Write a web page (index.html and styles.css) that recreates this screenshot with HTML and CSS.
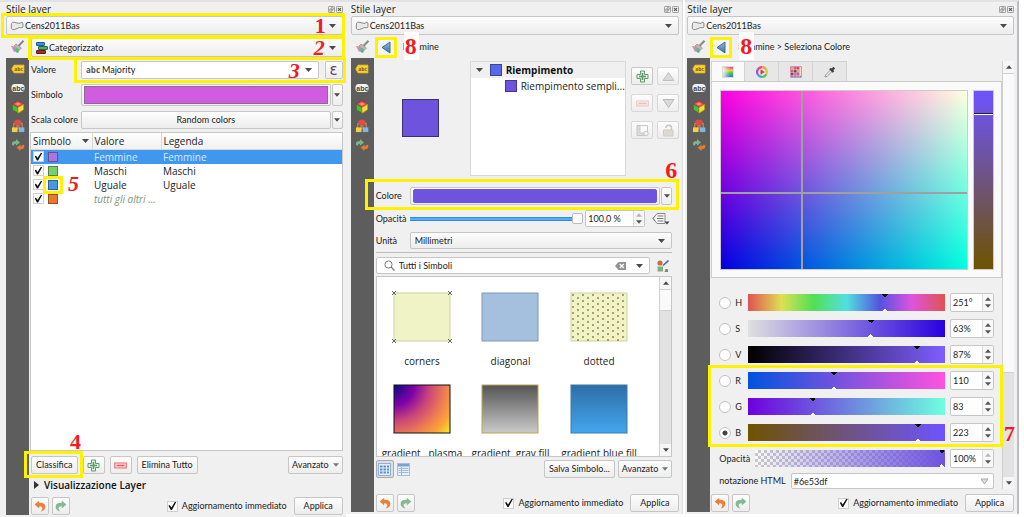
FILE: index.html
```html
<!DOCTYPE html>
<html lang="it">
<head>
<meta charset="utf-8">
<meta name="viewport" content="width=device-width, initial-scale=1">
<title>Stile layer</title>
<link rel="stylesheet" href="styles.css">
</head>
<body>
<svg class="defs" aria-hidden="true">
  <defs>
    <linearGradient id="g-plasma-a" x1="0" y1="0" x2="0" y2="1"><stop offset="0" stop-color="#8fb8dc"/><stop offset="1" stop-color="#3f74a8"/></linearGradient>
    <symbol id="i-poly" viewBox="0 0 14 10"><path d="M1.5 2.5Q2 .8 4 1.2T8 2.2T12 1.2Q13.2 1.5 13 4Q13.4 6.5 12 6.8Q9 6 7 7.6Q4.500 8.800 2.400 8.600Q1 8 1.300 6Z" fill="#e9e9e9" stroke="#8b8b8b"/></symbol>
    <symbol id="i-brush" viewBox="0 0 15 14"><path d="M13.500.8L8.500 6" stroke="#8a8a84" stroke-width="2"/><path d="M6 4L11.500 8L9.500 10L4 6Z" fill="#b9bbb4" stroke="#85877f" stroke-width=".6"/><path d="M1 6L5 6.500L7.500 10L4 12Q2.500 9 1 6Z" fill="#f08a90"/><path d="M4 6.500L6.500 8.500L6 12Q4 11 3.500 9Z" fill="#8d9be0"/><path d="M6 8L9.500 10L8 13Q6 13 5.500 11Z" fill="#58bd6a"/></symbol>
    <symbol id="i-tag" viewBox="0 0 14 10"><path d="M3 1H13V9H3L.6 5Z" fill="#f7cf38" stroke="#e0ad1c" stroke-width=".7"/><text x="3.200" y="7" class="glyph-dark">abc</text></symbol>
    <symbol id="i-abc" viewBox="0 0 14 10"><rect x=".4" y="1" width="13.200" height="8" rx="3.500" fill="#f2f2f2"/><text x="1.300" y="7.500" class="glyph-mask">abc</text></symbol>
    <symbol id="i-cube" viewBox="0 0 14 15"><path d="M7 .8L13 4.200L7 8L1 4.200Z" fill="#ee5048" stroke="#b1221e" stroke-width=".7"/><path d="M1 4.500L7 8V14.200L1 10.500Z" fill="#58b83c" stroke="#2c7a20" stroke-width=".7"/><path d="M13 4.500L7 8V14.200L13 10.500Z" fill="#f6dc38" stroke="#b59115" stroke-width=".7"/><path d="M4 4.300L7 2.600L10 4.300L7 6Z" fill="#f89088"/></symbol>
    <symbol id="i-diagram" viewBox="0 0 14 15"><path d="M2.500 10V5H11.500V10M6 6V11M8 6V11" stroke="#d98a4b" fill="none" stroke-width="1.200"/><path d="M5 .8H9L11.500 3L10 6.500H4L2.500 3Z" fill="#df4b4b"/><rect x=".5" y="9" width="6" height="5" fill="#f3d13c"/><rect x="7.800" y="9" width="6" height="5" fill="#7db5e8"/></symbol>
    <symbol id="i-history" viewBox="0 0 14 13"><path d="M1 6.500Q.2 2.200 5 2.400V.6L9 4L5 7.200V5.400Q2.600 5.200 2.600 7.500Z" fill="#7ab583"/><path d="M13.200 6.800Q14 11 9.500 10.800V12.600L5.500 9.300L9.500 6V7.800Q11.600 8 11.500 6Z" fill="#e07c38"/></symbol>
    <symbol id="i-categ" viewBox="0 0 12 12"><rect x=".5" y=".5" width="8" height="3" rx=".5" fill="#3f8fd8" stroke="#205a9c"/><rect x="2.500" y="4.500" width="9" height="3" rx=".5" fill="#4fae6b" stroke="#216b45"/><rect x=".5" y="8.500" width="9" height="3" rx=".5" fill="#ab2a22" stroke="#6e1411"/></symbol>
    <symbol id="i-plus" viewBox="0 0 13 13"><path d="M4.500 1H8.500V4.500H12V8.500H8.500V12H4.500V8.500H1V4.500H4.500Z" fill="#e3f0e3" stroke="#5f9b69"/><path d="M6.500 3V10M3 6.500H10" stroke="#5f9b69" stroke-width="1.600"/></symbol>
    <symbol id="i-minus" viewBox="0 0 13 7"><rect x=".7" y="1" width="11.600" height="5" fill="#fbdcdc" stroke="#ea6a6f"/><path d="M2.500 3.500H10.500" stroke="#ea5c63" stroke-width="1.500"/></symbol>
    <symbol id="i-undo" viewBox="0 0 12 12"><path d="M.6 4.500L5.200.8V2.800Q11.400 2.600 11.400 7Q11 10.800 6.500 11.400Q9 9.500 8.200 7.500Q7.500 6.200 5.200 6.200V8.400Z" fill="#e9813a"/></symbol>
    <symbol id="i-redo" viewBox="0 0 12 12"><path d="M11.400 4.500L6.800.8V2.800Q.6 2.600.6 7Q1 10.800 5.500 11.400Q3 9.500 3.800 7.500Q4.500 6.200 6.800 6.200V8.400Z" fill="#86b991"/></symbol>
    <symbol id="i-back" viewBox="0 0 10 13"><path d="M9 1V12L1 6.500Z" fill="url(#g-plasma-a)" stroke="#35648f" stroke-width=".9"/></symbol>
    <symbol id="i-up" viewBox="0 0 13 10"><path d="M6.500 1L12 9H1Z" fill="#dadada" stroke="#c0c0c0"/></symbol>
    <symbol id="i-down" viewBox="0 0 13 10"><path d="M6.500 9L12 1H1Z" fill="#dadada" stroke="#b9b9b9"/></symbol>
    <symbol id="i-copy" viewBox="0 0 13 12"><path d="M1 1H9.500V11H1Z" fill="#dcdcdc" stroke="#c6c6c6"/><path d="M4 1H11.500V8.500H4Z" fill="#fafafa" stroke="#c9c9c9"/><circle cx="10" cy="9" r="2.300" fill="#f2f2f2" stroke="#c6c6c6"/></symbol>
    <symbol id="i-lock" viewBox="0 0 13 13"><path d="M4 4V3.500Q4.200 1.200 6.700 1.200Q9.300 1.200 9.500 3.500V6" fill="none" stroke="#c6c6c6" stroke-width="1.500"/><rect x="1.500" y="6" width="9.500" height="6" rx=".5" fill="#dedace" stroke="#cdcac0"/></symbol>
    <symbol id="i-float" viewBox="0 0 8 8"><rect x=".5" y=".5" width="7" height="7" rx="1" fill="none" stroke="#8d8d8d"/><path d="M3.500 2H6V4.500H3.500ZM2 3.500H4.500V6H2Z" fill="none" stroke="#777" stroke-width=".7"/></symbol>
    <symbol id="i-close" viewBox="0 0 8 8"><rect x=".5" y=".5" width="7" height="7" rx="1" fill="none" stroke="#8d8d8d"/><path d="M2.300 2.300L5.700 5.700M5.700 2.300L2.300 5.700" stroke="#555" stroke-width="1.200"/></symbol>
    <symbol id="i-caret" viewBox="0 0 7 4"><path d="M0 0H7L3.500 4Z" fill="currentColor"/></symbol>
    <symbol id="i-caret-up" viewBox="0 0 7 4"><path d="M0 4H7L3.500 0Z" fill="currentColor"/></symbol>
    <symbol id="i-search" viewBox="0 0 11 11"><circle cx="4.500" cy="4.500" r="3.600" fill="none" stroke="#777"/><path d="M7.200 7.200L10.500 10.500" stroke="#777" stroke-width="1.200"/></symbol>
    <symbol id="i-clear" viewBox="0 0 11 8"><path d="M3.500 0H11V8H3.500L0 4Z" fill="#8f9296"/><path d="M4.800 2L8.800 6M8.800 2L4.800 6" stroke="#fff" stroke-width="1.200"/></symbol>
    <symbol id="i-style" viewBox="0 0 12 12"><circle cx="3" cy="3" r="2.600" fill="#c9703a"/><path d="M11.500.5L6 5.500" stroke="#3d75a8" stroke-width="1.600"/><rect x=".5" y="6.500" width="5.500" height="5" fill="#7fae87"/><text x="7.500" y="11.500" class="glyph-small">a</text></symbol>
    <symbol id="i-override" viewBox="0 0 18 14"><path d="M5 1.500H13V11.500H5L1 6.500Z" fill="#fafafa" stroke="#888"/><path d="M5.500 4H11.500M5 6.500H11.500M5.500 9H11.500M3 4L1 6.500L3 9" stroke="#777" fill="none"/><path d="M12.500 9.500H17.500L15 12.500Z" fill="#444"/></symbol>
    <symbol id="i-grid" viewBox="0 0 13 13"><rect x=".5" y=".5" width="12" height="12" fill="#e6effa" stroke="#8fb0dc"/><path d="M2 2.500H4.500V4.500H2ZM5.500 2.500H8V4.500H5.500ZM9 2.500H11V4.500H9ZM2 5.500H4.500V7.500H2ZM5.500 5.500H8V7.500H5.500ZM9 5.500H11V7.500H9ZM2 8.500H4.500V10.500H2ZM5.500 8.500H8V10.500H5.500ZM9 8.500H11V10.500H9Z" fill="#5f8fd0"/></symbol>
    <symbol id="i-list" viewBox="0 0 13 13"><rect x=".5" y=".5" width="12" height="12" fill="#e6effa" stroke="#a3bfe2"/><path d="M1 1H12V3.500H1Z" fill="#7ba3d8"/><path d="M4.500 3.500V12M1.500 5.500H11.500M1.500 7.500H11.500M1.500 9.500H11.500" stroke="#9bbbe3"/></symbol>
  </defs>
</svg>

<main class="docks">
  <section class="dock">
    <header class="dock-title"><h2>Stile layer</h2>
      <button type="button" class="tiny" aria-label="Sgancia"><svg><use href="#i-float"/></svg></button>
      <button type="button" class="tiny" aria-label="Chiudi"><svg><use href="#i-close"/></svg></button>
    </header>
    <div class="combo layer marked">
      <svg class="ic-poly"><use href="#i-poly"/></svg>
      <select aria-label="Layer"><option>Cens2011Bas</option></select>
      <svg class="caret"><use href="#i-caret"/></svg>
      <span class="mark mark-layer"></span><span class="num num-1">1</span>
    </div>
    <div class="dock-body">
      <nav class="side" aria-label="Pagine">
        <button type="button" class="active" aria-label="Simbologia"><svg><use href="#i-brush"/></svg></button>
        <div class="side-dark">
          <button type="button" aria-label="Etichette"><svg><use href="#i-tag"/></svg></button>
          <button type="button" aria-label="Maschere"><svg><use href="#i-abc"/></svg></button>
          <button type="button" aria-label="Vista 3D"><svg><use href="#i-cube"/></svg></button>
          <button type="button" aria-label="Diagrammi"><svg><use href="#i-diagram"/></svg></button>
          <button type="button" aria-label="Storico"><svg><use href="#i-history"/></svg></button>
        </div>
      </nav>
      <div class="content">
        <div class="combo renderer marked">
          <svg class="ic-categ"><use href="#i-categ"/></svg>
          <select aria-label="Tipo di simbologia"><option>Categorizzato</option></select>
          <svg class="caret"><use href="#i-caret"/></svg>
          <span class="mark mark-renderer"></span><span class="num num-2">2</span>
        </div>
        <div class="form">
          <label for="valore">Valore</label>
          <div class="field marked value-field">
            <div class="combo white grow"><span class="abc">abc</span>
              <select id="valore"><option>Majority</option></select>
              <svg class="caret"><use href="#i-caret"/></svg></div>
            <button type="button" class="btn epsilon" aria-label="Espressione">ε</button>
            <span class="mark mark-value"></span><span class="num num-3">3</span>
          </div>
          <label for="simbolo">Simbolo</label>
          <div class="field split tall">
            <button type="button" id="simbolo" class="btn grow color-btn"><span class="fill orchid"></span></button>
            <button type="button" class="btn drop" aria-label="Menu simbolo"><svg class="caret"><use href="#i-caret"/></svg></button>
          </div>
          <label for="scala">Scala colore</label>
          <div class="field split">
            <button type="button" id="scala" class="btn grow">Random colors</button>
            <button type="button" class="btn drop" aria-label="Menu scala colore"><svg class="caret"><use href="#i-caret"/></svg></button>
          </div>
        </div>
        <div class="list">
          <table>
            <colgroup><col class="c-sym"><col class="c-val"><col></colgroup>
            <thead><tr><th>Simbolo<svg class="caret sort"><use href="#i-caret"/></svg></th><th>Valore</th><th>Legenda</th></tr></thead>
            <tbody>
              <tr class="selected"><td><div class="sym"><input type="checkbox" checked aria-label="Femmine"><i class="sw violet"></i></div></td><td>Femmine</td><td>Femmine</td></tr>
              <tr><td><div class="sym"><input type="checkbox" checked aria-label="Maschi"><i class="sw green"></i></div></td><td>Maschi</td><td>Maschi</td></tr>
              <tr><td><div class="sym"><input type="checkbox" checked aria-label="Uguale"><span class="marked"><i class="sw blue"></i><span class="mark mark-swatch"></span><span class="num num-5">5</span></span></div></td><td>Uguale</td><td>Uguale</td></tr>
              <tr><td><div class="sym"><input type="checkbox" checked aria-label="Tutti gli altri"><i class="sw orange"></i></div></td><td class="other">tutti gli altri ...</td><td></td></tr>
            </tbody>
          </table>
        </div>
        <div class="row class-actions">
          <span class="marked"><button type="button" class="btn">Classifica</button><span class="mark mark-classify"></span><span class="num num-4">4</span></span>
          <button type="button" class="btn icon" aria-label="Aggiungi"><svg class="ic-13"><use href="#i-plus"/></svg></button>
          <button type="button" class="btn icon" aria-label="Rimuovi"><svg class="ic-minus"><use href="#i-minus"/></svg></button>
          <button type="button" class="btn">Elimina Tutto</button>
          <span class="grow"></span>
          <button type="button" class="btn menu">Avanzato<svg class="caret"><use href="#i-caret"/></svg></button>
        </div>
        <button type="button" class="disclosure"><svg viewBox="0 0 5 8"><path d="M0 0L5 4L0 8Z"/></svg>Visualizzazione Layer</button>
        <div class="row footer">
          <button type="button" class="btn square" aria-label="Annulla"><svg class="ic-12"><use href="#i-undo"/></svg></button>
          <button type="button" class="btn square" aria-label="Ripeti"><svg class="ic-12"><use href="#i-redo"/></svg></button>
          <span class="grow"></span>
          <label class="check"><input type="checkbox" checked>Aggiornamento immediato</label>
          <button type="button" class="btn apply">Applica</button>
        </div>
      </div>
    </div>
  </section>

  <section class="dock dock-mid">
    <header class="dock-title"><h2>Stile layer</h2>
      <button type="button" class="tiny" aria-label="Sgancia"><svg><use href="#i-float"/></svg></button>
      <button type="button" class="tiny" aria-label="Chiudi"><svg><use href="#i-close"/></svg></button>
    </header>
    <div class="combo layer">
      <svg class="ic-poly"><use href="#i-poly"/></svg>
      <select aria-label="Layer"><option>Cens2011Bas</option></select>
      <svg class="caret"><use href="#i-caret"/></svg>
    </div>
    <div class="dock-body">
      <nav class="side" aria-label="Pagine">
        <button type="button" class="active" aria-label="Simbologia"><svg><use href="#i-brush"/></svg></button>
        <div class="side-dark">
          <button type="button" aria-label="Etichette"><svg><use href="#i-tag"/></svg></button>
          <button type="button" aria-label="Maschere"><svg><use href="#i-abc"/></svg></button>
          <button type="button" aria-label="Vista 3D"><svg><use href="#i-cube"/></svg></button>
          <button type="button" aria-label="Diagrammi"><svg><use href="#i-diagram"/></svg></button>
          <button type="button" aria-label="Storico"><svg><use href="#i-history"/></svg></button>
        </div>
      </nav>
      <div class="content">
        <div class="crumbs marked">
          <button type="button" class="back" aria-label="Indietro"><svg><use href="#i-back"/></svg></button>
          <span>Femmine</span><span class="num num-8">8</span>
        </div>
        <div class="symbol">
          <div class="preview"></div>
          <ul class="tree">
            <li class="root"><svg class="caret"><use href="#i-caret"/></svg><i class="sw indigo"></i>Riempimento</li>
            <li class="leaf"><i class="sw purple"></i>Riempimento sempli...</li>
          </ul>
          <div class="tools marked">
            <button type="button" class="btn" aria-label="Aggiungi livello"><svg class="ic-13"><use href="#i-plus"/></svg></button>
            <button type="button" class="btn off" disabled aria-label="Sposta su"><svg class="ic-13"><use href="#i-up"/></svg></button>
            <button type="button" class="btn off faded" disabled aria-label="Rimuovi livello"><svg class="ic-minus"><use href="#i-minus"/></svg></button>
            <button type="button" class="btn off" disabled aria-label="Sposta giù"><svg class="ic-13"><use href="#i-down"/></svg></button>
            <button type="button" class="btn off" disabled aria-label="Duplica"><svg class="ic-13"><use href="#i-copy"/></svg></button>
            <button type="button" class="btn off" disabled aria-label="Blocca"><svg class="ic-13"><use href="#i-lock"/></svg></button>
          </div>
        </div>
        <div class="props">
          <div class="prop color-row marked">
            <label for="colore">Colore</label>
            <div class="field split grow">
              <button type="button" id="colore" class="btn grow color-btn"><span class="fill purple round"></span></button>
              <button type="button" class="btn drop" aria-label="Menu colore"><svg class="caret"><use href="#i-caret"/></svg></button>
            </div>
            <span class="mark mark-color"></span><span class="num num-6">6</span>
          </div>
          <div class="prop">
            <label for="opacita">Opacità</label>
            <input type="range" id="opacita" class="bar grow" min="0" max="100" value="100">
            <span class="spin wide"><input type="text" value="100,0 %" aria-label="Valore opacità"><span class="steps"><button type="button" class="dim" aria-label="Aumenta"><svg><use href="#i-caret-up"/></svg></button><button type="button" aria-label="Riduci"><svg><use href="#i-caret"/></svg></button></span></span>
            <button type="button" class="override" aria-label="Sovrascrittura dati"><svg><use href="#i-override"/></svg></button>
          </div>
          <div class="prop">
            <label for="unita">Unità</label>
            <div class="combo grow"><select id="unita"><option>Millimetri</option></select><svg class="caret"><use href="#i-caret"/></svg></div>
          </div>
          <hr>
          <div class="row search-row">
            <div class="combo white grow">
              <svg class="ic-search"><use href="#i-search"/></svg>
              <input type="text" value="Tutti i Simboli" aria-label="Cerca simboli">
              <svg class="ic-clear"><use href="#i-clear"/></svg>
              <svg class="caret"><use href="#i-caret"/></svg>
            </div>
            <button type="button" class="plain" aria-label="Gestore stile"><svg class="ic-12"><use href="#i-style"/></svg></button>
          </div>
          <div class="gallery">
            <div class="thumbs">
              <figure><svg viewBox="0 0 60 52"><rect x="2" y="2" width="56" height="48" fill="#f0f3c6" stroke="#cfd3a0"/><path d="M0 0L4 4M4 0L0 4M56 0L60 4M60 0L56 4M0 48L4 52M4 48L0 52M56 48L60 52M60 48L56 52" stroke="#666"/></svg><figcaption>corners</figcaption></figure>
              <figure><svg viewBox="0 0 60 52"><rect x="2" y="2" width="56" height="48" fill="#a5bfdf" stroke="#7f98b5"/></svg><figcaption>diagonal</figcaption></figure>
              <figure><svg viewBox="0 0 60 52"><defs><pattern id="p-dots" width="10" height="6" patternUnits="userSpaceOnUse" x="3" y="2"><circle cx="1" cy="2" r=".9" fill="#8a7c3f"/><circle cx="6" cy="5" r=".9" fill="#8a7c3f"/></pattern></defs><rect x="2" y="2" width="56" height="48" fill="#f0f3c6" stroke="#cfd3a0"/><rect x="2" y="2" width="56" height="48" fill="url(#p-dots)"/></svg><figcaption>dotted</figcaption></figure>
              <figure><svg viewBox="0 0 60 52"><defs><radialGradient id="g-plasma" gradientUnits="userSpaceOnUse" cx="2" cy="2" r="72"><stop offset="0" stop-color="#0d0887"/><stop offset=".28" stop-color="#7e03a8"/><stop offset=".5" stop-color="#cb4679"/><stop offset=".72" stop-color="#f07f4f"/><stop offset=".87" stop-color="#fca636"/><stop offset="1" stop-color="#f3e824"/></radialGradient></defs><rect x="2" y="2" width="56" height="48" fill="url(#g-plasma)" stroke="#111"/></svg><figcaption>gradient&nbsp; &nbsp;plasma</figcaption></figure>
              <figure><svg viewBox="0 0 60 52"><defs><linearGradient id="g-gray" x2="0" y2="1"><stop offset="0" stop-color="#545454"/><stop offset="1" stop-color="#cacaca"/></linearGradient></defs><rect x="2" y="2" width="56" height="48" fill="url(#g-gray)" stroke="#b7a64c"/></svg><figcaption>gradient&nbsp; gray fill</figcaption></figure>
              <figure><svg viewBox="0 0 60 52"><defs><linearGradient id="g-blue" x2="0" y2="1"><stop offset="0" stop-color="#2d6fa5"/><stop offset="1" stop-color="#44a5f0"/></linearGradient></defs><rect x="2" y="2" width="56" height="48" fill="url(#g-blue)" stroke="#3d7aa6"/></svg><figcaption>gradient blue fill</figcaption></figure>
            </div>
            <div class="scroll"><span class="arrow"><svg class="caret"><use href="#i-caret-up"/></svg></span><span class="handle short"></span><span class="grow"></span><span class="arrow"><svg class="caret"><use href="#i-caret"/></svg></span></div>
          </div>
          <div class="row view-row">
            <button type="button" class="btn square pressed" aria-label="Vista icone"><svg class="ic-13"><use href="#i-grid"/></svg></button>
            <button type="button" class="plain" aria-label="Vista elenco"><svg class="ic-13"><use href="#i-list"/></svg></button>
            <span class="grow"></span>
            <button type="button" class="btn">Salva Simbolo...</button>
            <button type="button" class="btn menu">Avanzato<svg class="caret"><use href="#i-caret"/></svg></button>
          </div>
        </div>
        <div class="row footer">
          <button type="button" class="btn square" aria-label="Annulla"><svg class="ic-12"><use href="#i-undo"/></svg></button>
          <button type="button" class="btn square" aria-label="Ripeti"><svg class="ic-12"><use href="#i-redo"/></svg></button>
          <span class="grow"></span>
          <label class="check"><input type="checkbox" checked>Aggiornamento immediato</label>
          <button type="button" class="btn apply">Applica</button>
        </div>
      </div>
    </div>
  </section>

  <section class="dock dock-last">
    <header class="dock-title"><h2>Stile layer</h2>
      <button type="button" class="tiny" aria-label="Sgancia"><svg><use href="#i-float"/></svg></button>
      <button type="button" class="tiny" aria-label="Chiudi"><svg><use href="#i-close"/></svg></button>
    </header>
    <div class="combo layer">
      <svg class="ic-poly"><use href="#i-poly"/></svg>
      <select aria-label="Layer"><option>Cens2011Bas</option></select>
      <svg class="caret"><use href="#i-caret"/></svg>
    </div>
    <div class="dock-body">
      <nav class="side" aria-label="Pagine">
        <button type="button" class="active" aria-label="Simbologia"><svg><use href="#i-brush"/></svg></button>
        <div class="side-dark">
          <button type="button" aria-label="Etichette"><svg><use href="#i-tag"/></svg></button>
          <button type="button" aria-label="Maschere"><svg><use href="#i-abc"/></svg></button>
          <button type="button" aria-label="Vista 3D"><svg><use href="#i-cube"/></svg></button>
          <button type="button" aria-label="Diagrammi"><svg><use href="#i-diagram"/></svg></button>
          <button type="button" aria-label="Storico"><svg><use href="#i-history"/></svg></button>
        </div>
      </nav>
      <div class="content">
        <div class="crumbs marked">
          <button type="button" class="back" aria-label="Indietro"><svg><use href="#i-back"/></svg></button>
          <span>Femmine &gt; Seleziona Colore</span><span class="num num-8">8</span>
        </div>
        <div class="picker">
          <div class="picker-main">
            <div class="tabs" role="tablist">
              <button type="button" role="tab" aria-selected="true" aria-label="Gradiente"><i class="t-ramp"></i></button>
              <button type="button" role="tab" aria-label="Ruota"><svg viewBox="0 0 12 12"><g fill="none" stroke-width="2.200"><path d="M6 1.200A4.800 4.800 0 0 1 10.200 3.600" stroke="#f0a02c"/><path d="M10.200 3.600A4.800 4.800 0 0 1 10.200 8.400" stroke="#c6d43a"/><path d="M10.200 8.400A4.800 4.800 0 0 1 6 10.800" stroke="#4fc45d"/><path d="M6 10.800A4.800 4.800 0 0 1 1.800 8.400" stroke="#42a6e0"/><path d="M1.800 8.400A4.800 4.800 0 0 1 1.800 3.600" stroke="#8a58d6"/><path d="M1.800 3.600A4.800 4.800 0 0 1 6 1.200" stroke="#e8408c"/></g><path d="M4.500 3.300L8.900 6L4.500 8.700Z" fill="#e2373c"/></svg></button>
              <button type="button" role="tab" aria-label="Campioni"><svg viewBox="0 0 12 12"><path fill="#b0306a" d="M.5.500H11.500V11.500H.5Z"/><path fill="#f0a060" d="M1 1H3.500V3.500H1ZM7 4H9V6H7Z"/><path fill="#e05858" d="M4 1H6.500V3.500H4ZM1 4H3.500V6.500H1ZM4 7H6.500V9H4Z"/><path fill="#f7d7c0" d="M9.500 1H11V11H9.500Z"/><path fill="#5d3a6d" d="M4 4H6.500V6.500H4ZM1 7H3.500V9H1Z"/><path fill="#6d8fd0" d="M1 9.500H11V11H1Z"/><path d="M3.700.500V11.500M6.800.500V11.500M9.200.500V11.500M.5 3.700H11.500M.5 6.700H11.500M.5 9.200H11.500" stroke="#f4e6ec" stroke-width=".5"/></svg></button>
              <button type="button" role="tab" aria-label="Contagocce"><svg viewBox="0 0 12 12"><path d="M7 3.500L8.500 5L3 10.500L1 11L1.500 9Z" fill="#e9e9e9" stroke="#888" stroke-width=".8"/><path d="M6 2.500L9.500 6M7.800 4.200L10.300 1.700" stroke="#35424f" stroke-width="2.400"/></svg></button>
            </div>
            <div class="plane">
              <div class="field2d"><i class="line-v"></i><i class="line-h"></i></div>
              <div class="ramp"><i></i></div>
            </div>
            <div class="channels">
              <div class="chan"><input type="radio" name="ch" id="ch-h"><label for="ch-h">H</label><input type="range" class="grad g-h" aria-label="H" max="359" value="251"><span class="spin"><input type="text" value="251°" aria-label="Valore H"><span class="steps"><button type="button" aria-label="Aumenta"><svg><use href="#i-caret-up"/></svg></button><button type="button" aria-label="Riduci"><svg><use href="#i-caret"/></svg></button></span></span></div>
              <div class="chan"><input type="radio" name="ch" id="ch-s"><label for="ch-s">S</label><input type="range" class="grad g-s" aria-label="S" max="100" value="63"><span class="spin"><input type="text" value="63%" aria-label="Valore S"><span class="steps"><button type="button" aria-label="Aumenta"><svg><use href="#i-caret-up"/></svg></button><button type="button" aria-label="Riduci"><svg><use href="#i-caret"/></svg></button></span></span></div>
              <div class="chan"><input type="radio" name="ch" id="ch-v"><label for="ch-v">V</label><input type="range" class="grad g-v" aria-label="V" max="100" value="87"><span class="spin"><input type="text" value="87%" aria-label="Valore V"><span class="steps"><button type="button" aria-label="Aumenta"><svg><use href="#i-caret-up"/></svg></button><button type="button" aria-label="Riduci"><svg><use href="#i-caret"/></svg></button></span></span></div>
              <div class="rgb marked">
                <div class="chan"><input type="radio" name="ch" id="ch-r"><label for="ch-r">R</label><input type="range" class="grad g-r" aria-label="R" max="255" value="110"><span class="spin"><input type="text" value="110" aria-label="Valore R"><span class="steps"><button type="button" aria-label="Aumenta"><svg><use href="#i-caret-up"/></svg></button><button type="button" aria-label="Riduci"><svg><use href="#i-caret"/></svg></button></span></span></div>
                <div class="chan"><input type="radio" name="ch" id="ch-g"><label for="ch-g">G</label><input type="range" class="grad g-g" aria-label="G" max="255" value="83"><span class="spin"><input type="text" value="83" aria-label="Valore G"><span class="steps"><button type="button" aria-label="Aumenta"><svg><use href="#i-caret-up"/></svg></button><button type="button" aria-label="Riduci"><svg><use href="#i-caret"/></svg></button></span></span></div>
                <div class="chan"><input type="radio" name="ch" id="ch-b" checked><label for="ch-b">B</label><input type="range" class="grad g-b" aria-label="B" max="255" value="223"><span class="spin"><input type="text" value="223" aria-label="Valore B"><span class="steps"><button type="button" aria-label="Aumenta"><svg><use href="#i-caret-up"/></svg></button><button type="button" aria-label="Riduci"><svg><use href="#i-caret"/></svg></button></span></span></div>
                <span class="mark mark-rgb"></span><span class="num num-7">7</span>
              </div>
              <div class="chan"><label class="long" for="alpha">Opacità</label><input type="range" id="alpha" class="grad g-a" max="100" value="100"><span class="spin"><input type="text" value="100%" aria-label="Valore opacità"><span class="steps"><button type="button" class="dim" aria-label="Aumenta"><svg><use href="#i-caret-up"/></svg></button><button type="button" aria-label="Riduci"><svg><use href="#i-caret"/></svg></button></span></span></div>
            </div>
            <div class="html-row"><label for="html">notazione HTML</label>
              <div class="combo white grow"><input type="text" id="html" value="#6e53df"><svg class="caret-open" viewBox="0 0 9 7"><path d="M1 1H8L4.500 6Z" fill="#ddd" stroke="#aaa"/></svg></div>
            </div>
          </div>
          <div class="scroll"><span class="arrow"><svg class="caret"><use href="#i-caret-up"/></svg></span><span class="handle long"></span><span class="grow"></span><span class="arrow"><svg class="caret"><use href="#i-caret"/></svg></span></div>
        </div>
        <div class="row footer">
          <button type="button" class="btn square" aria-label="Annulla"><svg class="ic-12"><use href="#i-undo"/></svg></button>
          <button type="button" class="btn square" aria-label="Ripeti"><svg class="ic-12"><use href="#i-redo"/></svg></button>
          <span class="grow"></span>
          <label class="check"><input type="checkbox" checked>Aggiornamento immediato</label>
          <button type="button" class="btn apply">Applica</button>
        </div>
      </div>
    </div>
  </section>
</main>
</body>
</html>
```
FILE: styles.css
```css
:root {
  --ui: "Lato", "Open Sans", sans-serif;
  --list: "Open Sans", "Noto Sans", sans-serif;
  --bg: #f0f0f0;
  --line: #c6c6c6;
  --mark: #fff200;
  --purple: #6e53df;
}

* { box-sizing: border-box; }

body {
  margin: 0;
  background: #fff;
  color: #222;
  font: 9px/12px var(--ui);
}

button, input, select { font: inherit; color: inherit; margin: 0; padding: 0; }
button { border: 0; background: none; }
svg { display: block; flex: none; }
h2, ul, figure { margin: 0; padding: 0; }
ul { list-style: none; }
label { white-space: nowrap; }
.defs { position: absolute; width: 0; height: 0; }
.grow { flex: 1; min-width: 0; }

.docks {
  display: grid;
  grid-template-columns: 345fr 337fr 335fr;
  min-height: 100vh;
  padding-right: 5px;
}
.dock {
  display: flex;
  flex-direction: column;
  min-width: 0;
  padding: 0 3px 3px 6px;
  background: var(--bg);
  border-top: 2px solid #e2e2e2;
}
.dock-mid { margin: 0 0 4px; padding: 0 3px 2px 5px; border-right: 1px solid #dcdcdc; }
.dock-last { margin: 0 0 4px 2px; padding: 0 3px 2px 2px; border-right: 2px solid #bcbcc2; }

.dock-title { display: flex; align-items: center; gap: 1px; height: 14px; }
.dock-title h2 { flex: 1; font: 10px/14px var(--list); }
.tiny svg { width: 7px; height: 7px; }

/* Combo boxes and buttons */
.combo, .btn {
  display: flex;
  align-items: center;
  background: linear-gradient(#fdfdfd, #ededed);
  border: 1px solid var(--line);
  border-radius: 2px;
}
.combo { height: 17px; padding: 0 6px 0 4px; }
.combo.white { background: #fff; }
.combo.layer { height: 19px; padding-left: 3px; }
.combo select, .combo input {
  flex: 1;
  min-width: 0;
  height: 14px;
  appearance: none;
  border: 0;
  outline: 0;
  background: none;
}
.caret { width: 7px; height: 4px; color: #4a4a4a; }
.btn { justify-content: center; height: 18px; padding: 0 4px; white-space: nowrap; }
.btn.drop { width: 11px; padding: 0; }
.btn.drop .caret { width: 6px; }
.btn.icon { width: 22px; padding: 0; }
.btn.square { width: 18px; padding: 0; }
.btn.pressed { background: #dedede; border-color: #aaa; }
.btn.menu { gap: 4px; padding: 0 3px; }
.btn.menu .caret { width: 6px; color: #777; }
.ic-poly { width: 14px; height: 10px; margin-right: 1px; }
.ic-categ { width: 12px; height: 12px; margin-right: 1px; }
.ic-12 { width: 12px; height: 12px; }
.ic-13 { width: 13px; height: 13px; }
.ic-minus { width: 13px; height: 7px; }
.row { display: flex; align-items: center; }

/* Side navigation */
.dock-body { flex: 1; display: grid; grid-template-columns: 23px 1fr; column-gap: 2px; }
.dock-last .dock-body { column-gap: 1px; }
.side { display: flex; flex-direction: column; }
.side button { display: grid; place-items: center; height: 19px; width: 100%; }
.side svg { width: 14px; height: 14px; }
.side .active { height: 23px; }
.side .active svg { width: 15px; height: 14px; }
.side-dark { flex: 1; padding-top: 1px; background: #5d5d5d; }
.glyph-dark { font: bold 5px var(--list); fill: #7a5a10; }
.glyph-mask { font: bold 7px "Liberation Sans", sans-serif; fill: #444; }
.glyph-small { font: bold 6px var(--list); fill: #555; }

.content { display: flex; flex-direction: column; min-width: 0; }

/* Categorised renderer */
.combo.renderer { height: 19px; margin-top: 3px; }
.form {
  display: grid;
  grid-template-columns: 50px 1fr;
  align-items: center;
  row-gap: 5px;
  padding-top: 4px;
}
.field { display: flex; gap: 6px; }
.field.split { gap: 0; }
.form .field .btn, .form .combo { height: 18px; }
.form .field.tall .btn { height: 22px; }
.field .drop { margin-left: 1px; }
.abc { margin-right: 2px; font: bold 8px/12px var(--list); color: #555; }
.epsilon { width: 18px; padding: 0; font: 15px/14px "DejaVu Sans", sans-serif; color: #5b4a6b; }
.color-btn { padding: 1px 2px; }
.fill { flex: 1; align-self: stretch; border: 1px solid #8d6b98; }
.fill.orchid { background: #d05ce0; }
.fill.purple { background: var(--purple); border-color: var(--purple); }
.fill.round { border-radius: 2px; }

.list { flex: 1; margin: 3px 0 5px -1px; background: #fff; border: 1px solid var(--line); }
table { width: 100%; table-layout: fixed; border-collapse: collapse; font: 10px/14px var(--list); }
.c-sym { width: 61px; }
.c-val { width: 69px; }
th, td { padding: 0 2px; text-align: left; font-weight: normal; white-space: nowrap; height: 14px; }
th { position: relative; height: 16px; background: linear-gradient(#fff, #f0f0f0); border-right: 1px solid #d8d8d8; border-bottom: 1px solid #d8d8d8; }
th:last-child { border-right: 0; }
.sort { position: absolute; right: 3px; top: 6px; }
.selected { background: #3f97ee; color: #d8eaff; }
.other { color: #80957f; font-style: italic; }
.sym { display: flex; align-items: center; gap: 4px; }
.sw { display: block; flex: none; width: 10px; height: 10px; border: 1px solid rgb(0 0 0 / 35%); }
.sw.violet { background: #a677e0; }
.sw.green { background: #77d06c; }
.sw.blue { background: #4299e6; }
.sw.orange { background: #e8792f; }
.sw.indigo { background: #5868e8; }
.sw.purple { background: var(--purple); }

input[type="checkbox"] {
  appearance: none;
  display: grid;
  place-items: center;
  width: 11px;
  height: 11px;
  background: #fff;
  border: 1px solid #cfcfcf;
}
input[type="checkbox"]:checked::before {
  content: "";
  width: 8px;
  height: 8px;
  background: #111;
  clip-path: polygon(0 45%, 20% 40%, 38% 68%, 82% 0, 100% 0, 45% 100%, 30% 100%);
}

.class-actions { gap: 5px; }
.disclosure {
  display: flex;
  align-items: center;
  gap: 5px;
  height: 21px;
  padding-left: 3px;
  font: 600 10px/14px var(--list);
  color: #111;
}
.disclosure svg { width: 5px; height: 8px; fill: #333; }

.footer { gap: 3px; margin-top: 2px; }
.check { display: flex; align-items: center; gap: 4px; margin-right: 4px; }
.apply { width: 49px; padding: 0; }

/* Callouts */
.marked { position: relative; }
.mark { position: absolute; border: 3px solid var(--mark); pointer-events: none; }
.num { position: absolute; font: bold 22px/18px "Liberation Serif", serif; color: #ee1c25; pointer-events: none; }
.mark-layer { inset: -4px -3px -4px -6px; }
.mark-renderer { inset: -3px -3px -4px -4px; }
.mark-value { inset: -4px -3px -4px -7px; }
.mark-swatch { inset: -4px -5px; }
.mark-classify { inset: -5px -5px -4px -7px; }
.mark-color { inset: -8px -7px -5px -11px; }
.mark-rgb { inset: -6px -9px -5px -11px; }
.num-1 { right: 16px; top: 0; }
.num-2 { right: 17px; top: 0; font-style: italic; }
.num-3 { right: 43px; top: 1px; font-style: italic; }
.num-4 { left: 39px; top: -23px; }
.num-5 { left: 20px; top: -5px; font-style: italic; }
.num-6 { right: -5px; top: -26px; font-size: 24px; }
.num-7 { right: -21px; bottom: -1px; }
.num-8 { left: 28px; top: -3px; width: 15px; padding: 5px 1px; background: #fff; font-size: 24px; }

/* Symbol editor */
.crumbs { display: flex; align-items: center; gap: 6px; height: 24px; }
.back {
  display: grid;
  place-items: center;
  width: 22px;
  height: 21px;
  margin-left: -1px;
  background: #f5f5f5;
  border: 3px solid var(--mark);
}
.back svg { width: 10px; height: 13px; }
.symbol { display: grid; grid-template-columns: 94px 1fr 48px; margin: 2px 0 11px; }
.preview { width: 37px; height: 38px; margin: 38px 0 0 26px; background: var(--purple); border: 1px solid #3b3068; }
.tree { min-height: 115px; margin-right: 5px; background: #fff; border: 1px solid #d8d8d8; font: 10px/16px var(--list); white-space: nowrap; overflow: hidden; }
.tree li { display: flex; align-items: center; gap: 4px; height: 16px; }
.tree .sw { width: 12px; height: 12px; }
.tree .root { padding-left: 5px; background: #f0f0f0; font-weight: bold; color: #111; }
.tree .root .caret { margin-right: 3px; }
.tree .leaf { padding-left: 34px; }
.tools { display: grid; grid-template-columns: 22px 22px; gap: 9px 4px; align-content: start; padding-top: 6px; }
.tools .btn { padding: 0; }
.tools .off { border-color: #d8d8d8; }
.faded svg { opacity: .35; }

.props { flex: 1; display: flex; flex-direction: column; padding-right: 7px; margin-bottom: 14px; }
.prop { display: flex; align-items: center; height: 17px; margin-bottom: 5px; }
.prop label { width: 34px; }
.prop.color-row { height: 18px; }
.spin { display: flex; width: 44px; height: 19px; background: #fff; border: 1px solid var(--line); border-radius: 2px; }
.spin input { flex: 1; min-width: 0; padding-left: 2px; border: 0; outline: 0; background: none; }
.steps { display: flex; flex-direction: column; justify-content: center; gap: 3px; width: 11px; border-left: 1px solid #ddd; background: #f7f7f7; }
.steps button { display: grid; place-items: center; color: #555; }
.steps svg { width: 6px; height: 4px; }
.steps .dim { color: #b5b5b5; }
.spin.wide { width: 60px; height: 17px; margin: 0 7px 0 2px; }
.override { margin-right: 2px; }
.override svg { width: 18px; height: 14px; }

.bar { appearance: none; height: 12px; background: linear-gradient(#2e8be0, #2e8be0 1px, #53adf8 1px, #53adf8 3px, #2e8be0 3px) center / 100% 4px no-repeat; }
.bar::-webkit-slider-thumb { appearance: none; width: 11px; height: 11px; background: #fdfdfd; border: 1px solid #bbb; border-radius: 2px; }

hr { width: 100%; margin: -2px 0 4px; border: 0; border-top: 1px solid #bdbdbd; }
.search-row { gap: 7px; margin-bottom: 2px; padding-right: 3px; }
.ic-search { width: 11px; height: 11px; margin: 0 4px 0 3px; }
.ic-clear { width: 11px; height: 8px; margin-right: 10px; }

.gallery { flex: 1 0 181px; display: flex; height: 181px; background: #fff; border: 1px solid var(--line); }
.thumbs {
  flex: 1;
  height: 179px;
  display: grid;
  grid-template-columns: repeat(3, 1fr);
  grid-auto-rows: 92px;
  padding: 14px 16px 0 1px;
  overflow: hidden;
  font: 10px/14px var(--list);
}
.thumbs figure { display: flex; flex-direction: column; align-items: center; gap: 11px; min-width: 0; white-space: nowrap; }
.thumbs svg { width: 60px; height: 52px; }
.scroll { display: flex; flex-direction: column; width: 12px; background: #e2e2e2; border-left: 1px solid #d0d0d0; }
.arrow { display: grid; place-items: center; height: 12px; background: #f6f6f6; }
.arrow .caret { width: 6px; }
.handle { background: #fafafa; border: 1px solid #d0d0d0; border-width: 1px 0; }
.handle.short { height: 22px; }
.handle.long { flex: 0 0 70%; }
.view-row { gap: 3px; margin-top: 3px; }

/* Colour picker */
.picker { flex: 1; display: flex; margin: 2px 0 3px; }
.picker-main { flex: 1; display: flex; flex-direction: column; min-width: 0; }
.tabs { display: flex; height: 21px; }
.tabs button { display: grid; place-items: center; width: 34px; background: #e7e7e7; border: 1px solid #d2d2d2; border-left: 0; }
.tabs [aria-selected="true"] { background: #fafafa; border-left: 1px solid #d2d2d2; border-bottom-color: #fafafa; }
.tabs svg, .t-ramp { width: 12px; height: 12px; }
.t-ramp { background: linear-gradient(to right, rgb(255 255 255 / 80%), transparent 70%), linear-gradient(#e83aa0, #f0d040 33%, #45c860 60%, #3b6fe8); border: 1px solid #ddd; }
.plane { flex: 1; display: flex; gap: 5px; margin-top: -1px; padding: 8px 7px 7px 8px; background: #fafafa; border: 1px solid #cbcbcb; min-height: 196px; }
.field2d {
  position: relative;
  flex: 1;
  border: 1px solid #ccc;
  background-image: linear-gradient(to top, #000, #f00), linear-gradient(to right, #0000df, #00ffdf);
  background-blend-mode: screen;
}
.line-v, .line-h { position: absolute; background: #a0a0a0; }
.line-v { left: 32.5%; top: 0; bottom: 0; width: 2px; }
.line-h { top: 56.8%; left: 0; right: 0; height: 2px; }
.ramp { position: relative; width: 21px; border: 1px solid #ccc; background: linear-gradient(#6e53ff, #6e5300); }
.ramp i { position: absolute; top: 12.5%; left: 0; right: 0; height: 2px; background: #fff; border-top: 1px solid #222; }
.channels, .rgb { display: flex; flex-direction: column; gap: 7px; }
.channels { padding: 15px 8px 0; }
.chan { display: flex; align-items: center; }
.chan label { width: 13px; margin-left: 4px; }
.chan .long { width: 36px; margin: 0; }
.chan .spin { margin-left: 5px; }
input[type="radio"] { appearance: none; width: 12px; height: 12px; border: 1px solid #c2c2c2; border-radius: 50%; background: #fff; }
input[type="radio"]:checked { background: radial-gradient(#444 0 2px, #fff 3px); }
.grad { appearance: none; flex: 1; min-width: 0; height: 17px; }
.grad::-webkit-slider-thumb {
  appearance: none;
  width: 6px;
  height: 17px;
  background:
    conic-gradient(from -45deg at 50% 100%, #000 90deg, transparent 0) top / 6px 3px no-repeat,
    conic-gradient(from 135deg at 50% 0, #fff 90deg, transparent 0) bottom / 6px 3px no-repeat;
}
.g-h { background: linear-gradient(to right, #df5353, #dfdf53 17%, #53df53 33%, #53dfdf 50%, #5353df 67%, #df53df 83%, #df5353); }
.g-s { background: linear-gradient(to right, #dfdfdf, #2900df); }
.g-v { background: linear-gradient(to right, #000, #7e5fff); }
.g-r { background: linear-gradient(to right, #0053df, #ff53df); }
.g-g { background: linear-gradient(to right, #6e00df, #6effdf); }
.g-b { background: linear-gradient(to right, #6e5300, #6e53ff); }
.g-a { background: linear-gradient(to right, transparent, var(--purple)), repeating-conic-gradient(#c8c8c8 0 25%, #fafafa 0 50%) 0 0 / 6px 6px; }
.html-row { display: flex; align-items: center; gap: 5px; padding: 5px 8px 0; }
.html-row .combo { height: 16px; padding: 0 4px 0 2px; }
.caret-open { width: 9px; height: 7px; }
```
